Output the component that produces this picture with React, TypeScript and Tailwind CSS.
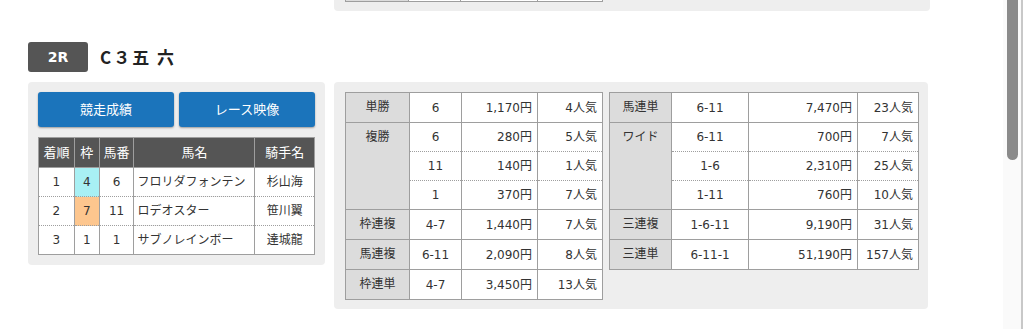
import React from 'react';

type Row = [string, string, string];
type Group = { label: string; rows: Row[] };

const leftPayouts: Group[] = [
  { label: '単勝', rows: [['6', '1,170円', '4人気']] },
  {
    label: '複勝',
    rows: [
      ['6', '280円', '5人気'],
      ['11', '140円', '1人気'],
      ['1', '370円', '7人気'],
    ],
  },
  { label: '枠連複', rows: [['4-7', '1,440円', '7人気']] },
  { label: '馬連複', rows: [['6-11', '2,090円', '8人気']] },
  { label: '枠連単', rows: [['4-7', '3,450円', '13人気']] },
];

const rightPayouts: Group[] = [
  { label: '馬連単', rows: [['6-11', '7,470円', '23人気']] },
  {
    label: 'ワイド',
    rows: [
      ['6-11', '700円', '7人気'],
      ['1-6', '2,310円', '25人気'],
      ['1-11', '760円', '10人気'],
    ],
  },
  { label: '三連複', rows: [['1-6-11', '9,190円', '31人気']] },
  { label: '三連単', rows: [['6-11-1', '51,190円', '157人気']] },
];

const results = [
  { pos: '1', waku: '4', num: '6', name: 'フロリダフォンテン', jockey: '杉山海', bg: 'bg-[#a8f0f4]' },
  { pos: '2', waku: '7', num: '11', name: 'ロデオスター', jockey: '笹川翼', bg: 'bg-[#fdc68e]' },
  { pos: '3', waku: '1', num: '1', name: 'サブノレインボー', jockey: '達城龍', bg: 'bg-white' },
];

function PayoutTable({ groups, widths }: { groups: Group[]; widths: number[] }) {
  return (
    <table className="border-collapse table-fixed text-[12px] text-[#333]">
      <colgroup>
        {widths.map((w, i) => (
          <col key={i} style={{ width: w }} />
        ))}
      </colgroup>
      <tbody>
        {groups.map((g) =>
          g.rows.map((r, i) => {
            const first = i === 0;
            const last = i === g.rows.length - 1;
            const single = g.rows.length === 1;
            const tb = `${first ? '' : '[border-top-style:dotted]'} ${last ? '' : '[border-bottom-style:dotted]'}`;
            const cell = `${single ? 'h-[30px]' : 'h-[29px]'} border border-[#9e9e9e] bg-white leading-none ${tb}`;
            return (
              <tr key={g.label + i}>
                {first && (
                  <td
                    rowSpan={g.rows.length}
                    className="border border-[#9e9e9e] bg-[#dcdcdc] align-top pt-[8px] text-center leading-none"
                  >
                    {g.label}
                  </td>
                )}
                <td className={`${cell} text-center`}>{r[0]}</td>
                <td className={`${cell} text-right pr-[5px]`}>{r[1]}</td>
                <td className={`${cell} text-right pr-[5px]`}>{r[2]}</td>
              </tr>
            );
          })
        )}
      </tbody>
    </table>
  );
}

function ResultTable() {
  const th = 'h-[30px] border border-[#9e9e9e] bg-[#555] font-normal text-[13px] text-white text-center leading-none';
  return (
    <table className="border-collapse table-fixed text-[12px] text-[#333]">
      <colgroup>
        <col style={{ width: 36 }} />
        <col style={{ width: 25 }} />
        <col style={{ width: 35 }} />
        <col style={{ width: 121 }} />
        <col style={{ width: 60 }} />
      </colgroup>
      <thead>
        <tr>
          <th className={th}>着順</th>
          <th className={th}>枠</th>
          <th className={th}>馬番</th>
          <th className={th}>馬名</th>
          <th className={th}>騎手名</th>
        </tr>
      </thead>
      <tbody>
        {results.map((r, i) => {
          const last = i === results.length - 1;
          const c = `h-[29px] border border-[#9e9e9e] [border-top-style:dotted] leading-none ${last ? '' : '[border-bottom-style:dotted]'}`;
          return (
            <tr key={r.pos}>
              <td className={`${c} bg-white text-center`}>{r.pos}</td>
              <td className={`${c} ${r.bg} text-center`}>{r.waku}</td>
              <td className={`${c} bg-white text-center`}>{r.num}</td>
              <td className={`${c} bg-white pl-[3px] whitespace-nowrap overflow-hidden`}>{r.name}</td>
              <td className={`${c} bg-white text-center`}>{r.jockey}</td>
            </tr>
          );
        })}
      </tbody>
    </table>
  );
}

export default function App() {
  return (
    <div className="flex h-[329px] w-[1023px] overflow-hidden bg-white font-['DejaVu_Sans','Noto_Sans_CJK_JP',sans-serif]">
      <div className="flex-1 pl-[28px]">
        {/* tail of previous race */}
        <div className="flex gap-[9px]">
          <div className="w-[297px]" />
          <div className="h-[11px] w-[596px] rounded-b-[4px] bg-[#eeeeee] pl-[11px]">
            <div className="flex h-[2px]">
              <div className="w-[64px] border-x border-b border-[#9e9e9e] bg-[#dcdcdc]" />
              <div className="w-[52px] border-r border-b border-[#9e9e9e] bg-white" />
              <div className="w-[77px] border-r border-b border-[#9e9e9e] bg-white" />
              <div className="w-[65px] border-r border-b border-[#9e9e9e] bg-white" />
            </div>
          </div>
        </div>

        <div className="mt-[31px] flex items-center gap-[12px]">
          <div className="flex h-[30px] w-[60px] items-center justify-center rounded-[3px] bg-[#555] text-[14px] font-bold text-white">
            2R
          </div>
          <div className="font-['Noto_Sans_CJK_JP',sans-serif] text-[17px] font-bold tracking-[2px] text-[#222]">C３五 六</div>
        </div>

        <div className="mt-[10px] flex items-start gap-[9px]">
          <div className="w-[297px] rounded-[4px] bg-[#eeeeee] p-[10px]">
            <div className="flex gap-[5px]">
              <button className="h-[35px] w-[136px] rounded-[3px] bg-[#1b74bb] text-[13px] text-white shadow-[0_1px_2px_rgba(0,0,0,0.35)]">
                競走成績
              </button>
              <button className="h-[35px] w-[136px] rounded-[3px] bg-[#1b74bb] text-[13px] text-white shadow-[0_1px_2px_rgba(0,0,0,0.35)]">
                レース映像
              </button>
            </div>
            <div className="mt-[10px]">
              <ResultTable />
            </div>
          </div>

          <div className="flex w-[594px] items-start gap-[6px] rounded-[4px] bg-[#eeeeee] pt-[10px] pb-[9px] pl-[11px]">
            <PayoutTable groups={leftPayouts} widths={[64, 52, 76, 65]} />
            <PayoutTable groups={rightPayouts} widths={[62, 77, 109, 61]} />
          </div>
        </div>
      </div>

      {/* scrollbar */}
      <div className="flex w-[20px] bg-[#fafafa]">
        <div className="ml-[4px] h-[160px] w-[11px] rounded-b-[6px] bg-[#8a8a8a]" />
        <div className="ml-auto w-[2px] bg-[#c8c8c8]" />
      </div>
    </div>
  );
}
